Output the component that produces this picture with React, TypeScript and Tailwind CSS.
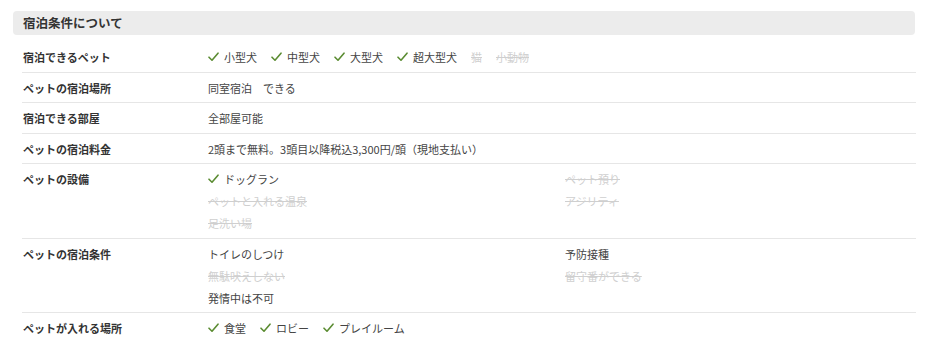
import React from 'react';

type Item = { label: string; ok?: boolean; check?: boolean };

const Check = () => (
  <svg width="11" height="10" viewBox="0 0 11 10" className="mr-[5px] shrink-0">
    <polyline points="1,5.2 4,8.2 10,1.2" fill="none" stroke="#5b8c32" strokeWidth="1.6" strokeLinecap="round" strokeLinejoin="round" />
  </svg>
);

const Tag: React.FC<{ item: Item }> = ({ item }) => {
  if (item.ok === false) {
    return <span className="text-[#cfcfcf] line-through">{item.label}</span>;
  }
  return (
    <span className="inline-flex items-center text-[#444]">
      {item.check && <Check />}
      {item.label}
    </span>
  );
};

const InlineList: React.FC<{ items: Item[] }> = ({ items }) => (
  <div className="flex flex-wrap items-center gap-x-[14px]">
    {items.map((it) => (
      <Tag key={it.label} item={it} />
    ))}
  </div>
);

const TwoCol: React.FC<{ items: Item[] }> = ({ items }) => (
  <div className="grid grid-cols-[357px_1fr]">
    {items.map((it) => (
      <div key={it.label} className="flex items-center h-[22px]">
        <Tag item={it} />
      </div>
    ))}
  </div>
);

const rows: { label: string; value: React.ReactNode }[] = [
  {
    label: '宿泊できるペット',
    value: (
      <InlineList
        items={[
          { label: '小型犬', check: true },
          { label: '中型犬', check: true },
          { label: '大型犬', check: true },
          { label: '超大型犬', check: true },
          { label: '猫', ok: false },
          { label: '小動物', ok: false },
        ]}
      />
    ),
  },
  { label: 'ペットの宿泊場所', value: <span className="text-[#444]">同室宿泊　できる</span> },
  { label: '宿泊できる部屋', value: <span className="text-[#444]">全部屋可能</span> },
  {
    label: 'ペットの宿泊料金',
    value: <span className="text-[#444]">2頭まで無料。3頭目以降税込3,300円/頭（現地支払い）</span>,
  },
  {
    label: 'ペットの設備',
    value: (
      <TwoCol
        items={[
          { label: 'ドッグラン', check: true },
          { label: 'ペット預り', ok: false },
          { label: 'ペットと入れる温泉', ok: false },
          { label: 'アジリティ', ok: false },
          { label: '足洗い場', ok: false },
        ]}
      />
    ),
  },
  {
    label: 'ペットの宿泊条件',
    value: (
      <TwoCol
        items={[
          { label: 'トイレのしつけ' },
          { label: '予防接種' },
          { label: '無駄吠えしない', ok: false },
          { label: '留守番ができる', ok: false },
          { label: '発情中は不可' },
        ]}
      />
    ),
  },
  {
    label: 'ペットが入れる場所',
    value: (
      <InlineList
        items={[
          { label: '食堂', check: true },
          { label: 'ロビー', check: true },
          { label: 'プレイルーム', check: true },
        ]}
      />
    ),
  },
];

export default function App() {
  return (
    <div
      className="w-[930px] h-[345px] bg-white overflow-hidden pt-[11px]"
      style={{ fontFamily: '"Noto Sans CJK JP", "Noto Sans", sans-serif' }}
    >
      <div className="ml-[13px] mr-[15px] h-[24px] rounded-[4px] bg-[#ececec] flex items-center pl-[10px]">
        <h2 className="text-[12.5px] font-bold text-[#333] leading-none">宿泊条件について</h2>
      </div>
      <div className="ml-[22px] mr-[14px] mt-[7px]">
        {rows.map((r, i) => (
          <div
            key={r.label}
            className={`flex pt-[4px] pb-[3.5px] text-[11px] leading-[22px] ${i > 0 ? 'border-t border-[#e6e6e6]' : ''}`}
          >
            <div className="w-[186px] shrink-0 pl-[1px] font-bold text-[#333]">{r.label}</div>
            <div className="flex-1 min-h-[22px] flex flex-col justify-center">{r.value}</div>
          </div>
        ))}
      </div>
    </div>
  );
}
